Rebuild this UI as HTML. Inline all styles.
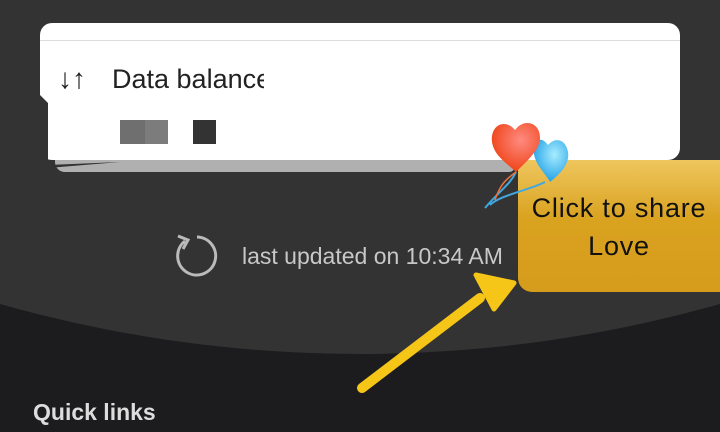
<!DOCTYPE html>
<html><head><meta charset="utf-8"><style>
body{margin:0;width:720px;height:432px;overflow:hidden;background:#1c1c1e;position:relative;font-family:"Liberation Sans",sans-serif}
.top{position:absolute;left:-961px;width:2642px;height:2642px;border-radius:50%;background:#333333;top:calc(354px - 2642px)}
.card{position:absolute;left:40px;top:23px;width:640px;height:137px;background:#fff;border-radius:12px}
.shadow{position:absolute;left:55px;top:150px;width:460px;height:22px;background:#b0b0b0;border-radius:0 0 6px 10px}
.line{position:absolute;left:40px;top:40px;width:640px;height:1px;background:#ddd}
</style></head><body>
<div class="top"></div>
<div class="shadow"></div>
<div class="card"></div>
<svg style="position:absolute;left:0;top:0" width="720" height="432">
<polygon points="40,95 40,160 48,168 120,162 48,165 48,103" fill="#333"/>
</svg>
<div class="line"></div>
<div style="position:absolute;left:58px;top:63px;font-size:28px;color:#222">↓↑</div>
<div style="position:absolute;left:112px;top:64px;font-size:27px;color:#222;width:152px;overflow:hidden;white-space:nowrap">Data balance</div>
<div style="position:absolute;left:120px;top:120px;width:25px;height:24px;background:#6f6f6f"></div>
<div style="position:absolute;left:145px;top:120px;width:23px;height:24px;background:#7c7c7c"></div>
<div style="position:absolute;left:193px;top:120px;width:23px;height:24px;background:#333"></div>
<svg style="position:absolute;left:0;top:0" width="720" height="432">
<path d="M185 241 A19 19 0 1 0 197 237" fill="none" stroke="#bbb" stroke-width="3"/>
<path d="M178 236 L188 240 L183 249" fill="none" stroke="#bbb" stroke-width="3"/>
<line x1="362" y1="388" x2="480" y2="298" stroke="#f5c518" stroke-width="10" stroke-linecap="round"/>
<polygon points="476,275 514,283 494,309" fill="#f5c518" stroke="#f5c518" stroke-width="5" stroke-linejoin="round"/>
</svg>
<div style="position:absolute;left:242px;top:243px;font-size:23px;color:#c8c8c8">last updated on 10:34 AM</div>
<div style="position:absolute;left:518px;top:160px;width:202px;height:132px;border-radius:0 0 0 14px;background:linear-gradient(#eec65e,#d9a21f 45%,#d69c1c);text-align:center;font-size:27px;letter-spacing:0.8px;line-height:38px;color:#111;padding-top:29px;box-sizing:border-box;white-space:nowrap">Click to share<br>Love</div>
<svg style="position:absolute;left:0;top:0" width="720" height="432">
<defs>
<radialGradient id="r" cx="0.6" cy="0.35" r="0.6"><stop offset="0" stop-color="#ff8a80"/><stop offset="1" stop-color="#f04a20"/></radialGradient>
<radialGradient id="b" cx="0.6" cy="0.35" r="0.6"><stop offset="0" stop-color="#a8ecff"/><stop offset="1" stop-color="#2ea8e8"/></radialGradient>
</defs>
<path d="M548 145 C540 134 532 142 534 154 C536 166 546 174 550 182 C560 174 570 164 568 152 C566 140 556 136 548 145Z" fill="url(#b)"/>
<path d="M515 130 C505 118 490 125 492 142 C494 156 508 164 516 172 C526 162 540 150 540 138 C540 122 524 118 515 130Z" fill="url(#r)"/>
<path d="M516 172 C510 185 500 190 485 208 M545 182 C530 190 500 195 490 205" stroke="#40a8e0" stroke-width="2" fill="none"/>
<path d="M516 172 C505 180 500 185 495 200" stroke="#f07040" stroke-width="1.5" fill="none"/>
</svg>
<div style="position:absolute;left:33px;top:399px;font-size:23px;font-weight:bold;color:#ddd">Quick links</div>
</body></html>
